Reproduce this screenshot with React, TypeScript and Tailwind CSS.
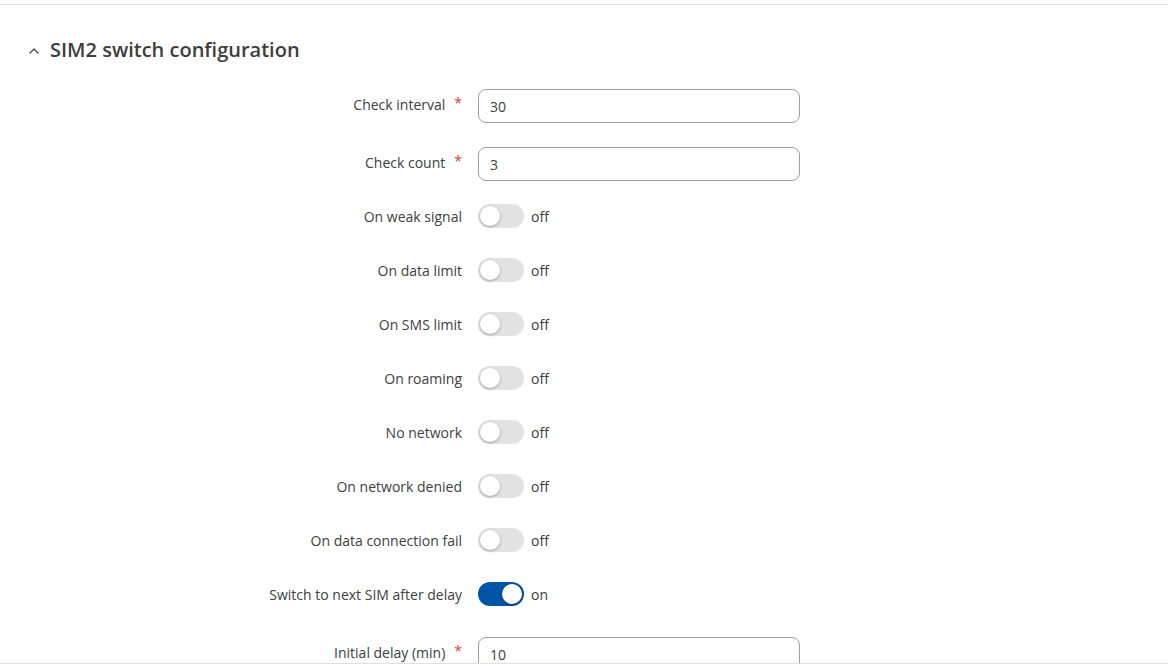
import { useState } from "react";

type Row =
  | { kind: "input"; label: string; value: string; required?: boolean; mt: string }
  | { kind: "toggle"; label: string; on: boolean; mt: string };

const rows: Row[] = [
  { kind: "input", label: "Check interval", value: "30", required: true, mt: "mt-0" },
  { kind: "input", label: "Check count", value: "3", required: true, mt: "mt-[24px]" },
  { kind: "toggle", label: "On weak signal", on: false, mt: "mt-[23px]" },
  { kind: "toggle", label: "On data limit", on: false, mt: "mt-[30px]" },
  { kind: "toggle", label: "On SMS limit", on: false, mt: "mt-[30px]" },
  { kind: "toggle", label: "On roaming", on: false, mt: "mt-[30px]" },
  { kind: "toggle", label: "No network", on: false, mt: "mt-[30px]" },
  { kind: "toggle", label: "On network denied", on: false, mt: "mt-[30px]" },
  { kind: "toggle", label: "On data connection fail", on: false, mt: "mt-[30px]" },
  { kind: "toggle", label: "Switch to next SIM after delay", on: true, mt: "mt-[30px]" },
  { kind: "input", label: "Initial delay (min)", value: "10", required: true, mt: "mt-[31px]" },
];

function Toggle({ on }: { on: boolean }) {
  return (
    <div className="flex items-center">
      <div
        className={
          "relative w-[46px] h-[24px] rounded-full " +
          (on ? "bg-[#0054a6]" : "bg-[#e2e2e2]")
        }
      >
        <div
          className={
            "absolute top-[2px] w-[20px] h-[20px] rounded-full bg-white shadow-[0_1px_3px_rgba(0,0,0,0.3)] " +
            (on ? "left-[24px]" : "left-[2px]")
          }
        />
      </div>
      <span className="ml-[7px] text-[14px] text-[#404040]">{on ? "on" : "off"}</span>
    </div>
  );
}

export default function App() {
  const [open] = useState(true);

  return (
    <div
      className="h-[667px] w-full bg-white flex flex-col overflow-hidden"
      style={{ fontFamily: '"Open Sans", "Noto Sans", sans-serif' }}
    >
      <div className="flex-1 overflow-hidden mt-[4px] border-t border-[#e3e3e3]">
        <div className="flex items-center h-[28px] mt-[31px] pl-[29px]">
          <svg width="10" height="7" viewBox="0 0 10 7" fill="none" className="mr-[11px]">
            <polyline
              points="1,6 5,2 9,6"
              stroke="#404040"
              strokeWidth="1.2"
              strokeLinecap="round"
              strokeLinejoin="round"
            />
          </svg>
          <h2 className="text-[20px] font-semibold text-[#3d3d3d] leading-[28px]">
            SIM2 switch configuration
          </h2>
        </div>

        {open && (
          <div className="flex flex-col mt-[25px]">
            {rows.map((r) => (
              <div key={r.label} className={"flex items-center " + r.mt}>
                <div
                  className={
                    "w-[462px] flex justify-end items-center text-[14px] text-[#404040] " +
                    (r.kind === "input" ? "-translate-y-[2px]" : "")
                  }
                >
                  <span>{r.label}</span>
                  {r.kind === "input" && r.required && (
                    <span className="ml-[9px] text-[#e5392e] -mt-[3px]">*</span>
                  )}
                </div>
                <div className="ml-[16px]">
                  {r.kind === "input" ? (
                    <div className="w-[322px] h-[34px] border border-[#9e9e9e] rounded-[8px] flex items-center px-[11px] text-[14px] text-[#404040]">
                      {r.value}
                    </div>
                  ) : (
                    <Toggle on={r.on} />
                  )}
                </div>
              </div>
            ))}
          </div>
        )}
      </div>
      <div className="h-[4px] border-t border-[#e0e0e0]" />
    </div>
  );
}
